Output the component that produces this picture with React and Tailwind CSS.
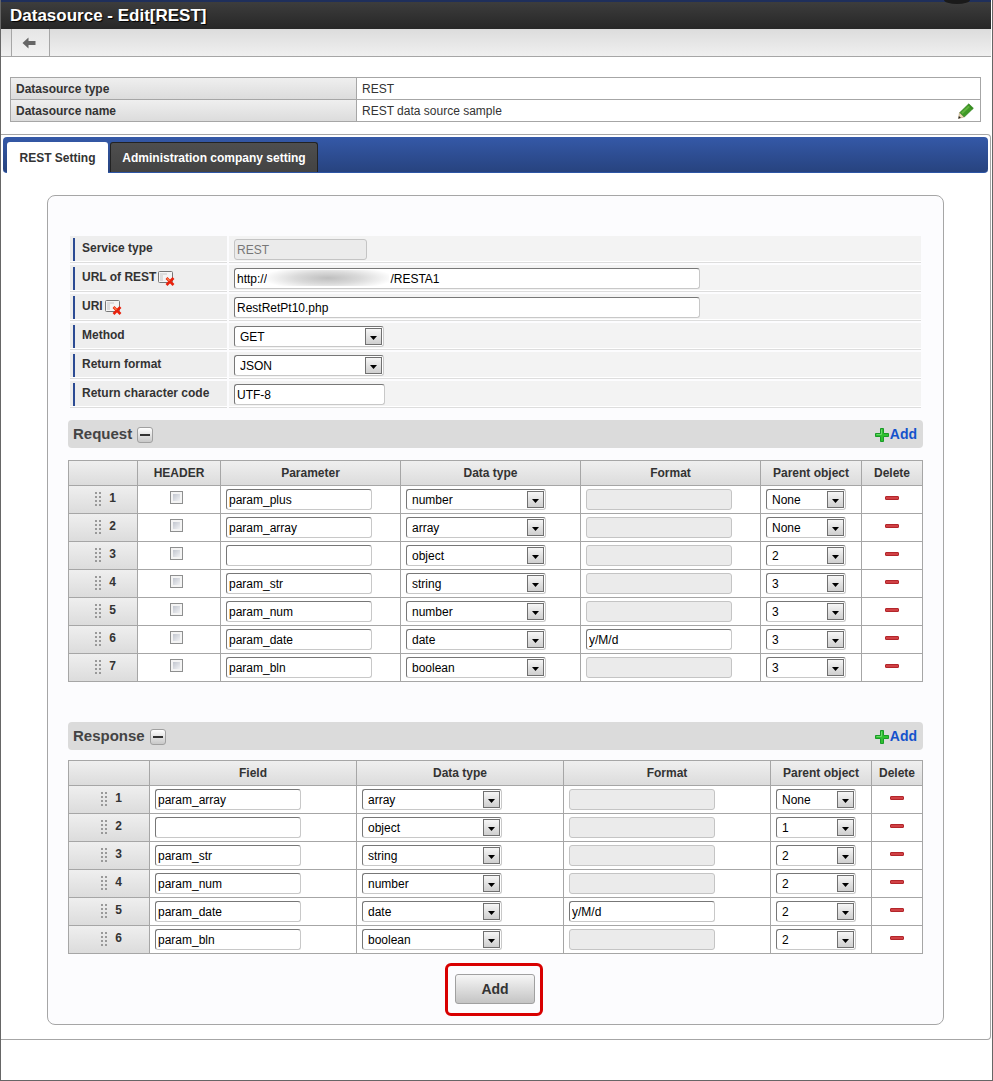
import { useState } from "react";

const REQUEST_ROWS = [
  { name: "param_plus", type: "number", format: "", parent: "None" },
  { name: "param_array", type: "array", format: "", parent: "None" },
  { name: "", type: "object", format: "", parent: "2" },
  { name: "param_str", type: "string", format: "", parent: "3" },
  { name: "param_num", type: "number", format: "", parent: "3" },
  { name: "param_date", type: "date", format: "y/M/d", parent: "3" },
  { name: "param_bln", type: "boolean", format: "", parent: "3" },
];

const RESPONSE_ROWS = [
  { name: "param_array", type: "array", format: "", parent: "None" },
  { name: "", type: "object", format: "", parent: "1" },
  { name: "param_str", type: "string", format: "", parent: "2" },
  { name: "param_num", type: "number", format: "", parent: "2" },
  { name: "param_date", type: "date", format: "y/M/d", parent: "2" },
  { name: "param_bln", type: "boolean", format: "", parent: "2" },
];

const DATA_TYPES = ["string", "number", "boolean", "date", "array", "object"];
const PARENTS = ["None", "1", "2", "3", "4", "5", "6", "7"];

// the host part of the address is masked by an overlay
const REST_URL = `http://${"\u00a0".repeat(37)}/RESTA1`;

function BackIcon() {
  return (
    <svg width="14" height="12" viewBox="0 0 14 12" aria-hidden="true">
      <path d="M0.5 6 6.5 0.5V4H13.5V8H6.5V11.5Z" fill="#666" />
    </svg>
  );
}

function PencilIcon() {
  return (
    <svg width="16" height="16" viewBox="0 0 16 16" aria-hidden="true">
      <path d="M0.5 15.5 1.5 9.5 6 14Z" fill="#ecd9b4" stroke="#a08a60" strokeWidth="0.5" />
      <path d="M0.3 15.7 0.9 13 2.9 14.8Z" fill="#222" />
      <path d="M1.8 9.5 10.8 0.8 15.4 5.2 6.3 14Z" fill="#3f9a26" stroke="#2a7a18" strokeWidth="0.6" />
      <path d="M3.2 9.6 11 2.2 12.4 3.5 4.6 11Z" fill="#62b23e" />
      <path d="M10 1.6 14.6 6" stroke="#2a7a18" strokeWidth="0.8" />
    </svg>
  );
}

function ClearIcon() {
  return (
    <svg width="18" height="16" viewBox="0 0 18 16" aria-hidden="true">
      <rect x="0.5" y="1.5" width="14" height="11" rx="1" fill="#f4f4f4" stroke="#777" />
      <path d="M2 3H9V5H5V11H2Z" fill="#ddd" />
      <path d="M8.5 8 15.5 15M15.5 8 8.5 15" stroke="#e8210c" strokeWidth="2.6" />
      <path d="M9 8.4 11.5 10.8" stroke="#ff8a4a" strokeWidth="1.2" />
    </svg>
  );
}

function PlusIcon() {
  return (
    <svg width="14" height="14" viewBox="0 0 14 14" aria-hidden="true">
      <path d="M5.5 0.5H8.5V5.5H13.5V8.5H8.5V13.5H5.5V8.5H0.5V5.5H5.5Z" fill="#2fc22f" stroke="#1a9a28" />
      <path d="M6.5 1.5V6.5H1.5" fill="none" stroke="#6bd86b" />
    </svg>
  );
}

function DragDots() {
  return (
    <svg width="6" height="14" viewBox="0 0 6 14" fill="#999" aria-hidden="true">
      {[0, 4, 8, 12].map((y) => (
        <g key={y}>
          <rect x="0" y={y} width="2" height="2" />
          <rect x="4" y={y} width="2" height="2" />
        </g>
      ))}
    </svg>
  );
}

function TextInput({ className = "", disabled = false, ...props }) {
  const look = disabled
    ? "border-[#c4c4c4] bg-[#ebebeb] text-[#777]"
    : "border-t-[#777] border-l-[#777] border-r-[#c8c8c8] border-b-[#c8c8c8] bg-white text-black";

  return (
    <input
      type="text"
      disabled={disabled}
      className={`block h-[21px] rounded-[3px] border px-[2px] text-xs outline-none ${look} ${className}`}
      {...props}
    />
  );
}

function SelectBox({ className = "", options, ...props }) {
  return (
    <span className={`relative block h-[21px] ${className}`}>
      <select
        className="block h-full w-full appearance-none rounded-[3px] border border-t-[#777] border-l-[#777] border-r-[#c8c8c8] border-b-[#c8c8c8] bg-white pr-5 pl-[5px] text-xs text-black outline-none"
        {...props}
      >
        {options.map((option) => (
          <option key={option}>{option}</option>
        ))}
      </select>
      <span className="pointer-events-none absolute top-[2px] right-[2px] flex h-[17px] w-[17px] items-center justify-center border border-[#707070] bg-linear-to-b from-[#f6f6f6] to-[#cfcfcf] pt-[2px]">
        <svg width="7" height="4" viewBox="0 0 7 4" aria-hidden="true">
          <path d="M0 0H7L3.5 4Z" fill="#000" />
        </svg>
      </span>
    </span>
  );
}

function FormRow({ id, label, clearable = false, children }) {
  return (
    <div className="flex gap-[2px]">
      <div className="flex h-[25px] w-[157px] shrink-0 items-end bg-[#eee] pl-[3px] shadow-[0_1px_#fff,0_2px_#ddd]">
        <div className="flex h-[23px] items-center gap-[2px] border-l-2 border-[#2c4b93] pb-[3px] pl-[7px]">
          <label htmlFor={id} className="font-bold">
            {label}
          </label>
          {clearable && (
            <button type="button" aria-label={`Clear ${label}`} className="mt-[2px]">
              <ClearIcon />
            </button>
          )}
        </div>
      </div>
      <div className="flex h-[25px] flex-1 items-end bg-[#f3f3f3] pb-px pl-[5px] shadow-[0_1px_#fff,0_2px_#ddd]">
        {children}
      </div>
    </div>
  );
}

function SectionBar({ title, open, onToggle, onAdd }) {
  return (
    <div className="flex h-7 items-center justify-between rounded bg-[#dbdbdb] pr-[6px] pl-[5px]">
      <div className="flex items-center gap-[5px]">
        <h2 className="text-[15px] leading-5 font-bold text-[#444]">{title}</h2>
        <button
          type="button"
          aria-label={`Toggle ${title}`}
          aria-expanded={open}
          onClick={onToggle}
          className="mt-[2px] flex h-4 w-4 items-center justify-center rounded-[3px] border border-[#a0a0a0] bg-linear-to-b from-white to-[#c8c8c8]"
        >
          <span className="h-[2px] w-[10px] bg-[#333]" />
        </button>
      </div>
      <button
        type="button"
        onClick={onAdd}
        className="flex items-center gap-px text-sm leading-5 font-bold text-[#1452cc]"
      >
        <span className="mt-[2px]">
          <PlusIcon />
        </span>
        Add
      </button>
    </div>
  );
}

function ParamTable({ title, nameLabel, rows, withHeaderFlag = false, onDelete }) {
  const th = "border-r border-b border-[#a6a6a6] bg-linear-to-b from-[#efefef] to-[#dcdcdc] font-bold";
  const td = "h-7 border-r border-b border-[#a6a6a6] bg-white p-0 pl-[5px]";

  return (
    <table className="w-full table-fixed border-separate border-spacing-0 border-t border-l border-[#a6a6a6]">
      <colgroup>
        <col className={withHeaderFlag ? "w-[69px]" : "w-[81px]"} />
        {withHeaderFlag && <col className="w-[83px]" />}
        <col />
        <col />
        <col />
        <col className="w-[101px]" />
        <col className={withHeaderFlag ? "w-[61px]" : "w-[51px]"} />
      </colgroup>
      <thead>
        <tr className="h-[25px]">
          <th className={th} aria-label="Order" />
          {withHeaderFlag && <th className={th}>HEADER</th>}
          <th className={th}>{nameLabel}</th>
          <th className={th}>Data type</th>
          <th className={th}>Format</th>
          <th className={th}>Parent object</th>
          <th className={th}>Delete</th>
        </tr>
      </thead>
      <tbody>
        {rows.map((row, index) => {
          const rowLabel = `${title} ${index + 1}`;
          return (
            <tr key={index}>
              <th className={`${th} p-0 pl-[5px]`} scope="row">
                <span className="flex items-center justify-center gap-2 pb-[2px]">
                  <DragDots />
                  <span className="pb-[2px]">{index + 1}</span>
                </span>
              </th>
              {withHeaderFlag && (
                <td className={`${td} pr-[10px]`}>
                  <input
                    type="checkbox"
                    aria-label={`${rowLabel} header`}
                    className="mx-auto mb-1 block h-[13px] w-[13px] appearance-none border border-[#8e8f8f] bg-linear-to-br from-[#b4b9c4] to-white shadow-[inset_0_0_0_2px_#f4f4f4] checked:from-[#4b6fae]"
                  />
                </td>
              )}
              <td className={td}>
                <TextInput className="w-[146px]" defaultValue={row.name} aria-label={`${rowLabel} name`} />
              </td>
              <td className={td}>
                <SelectBox
                  className="w-[140px]"
                  options={DATA_TYPES}
                  defaultValue={row.type}
                  aria-label={`${rowLabel} data type`}
                />
              </td>
              <td className={td}>
                <TextInput
                  className="w-[146px]"
                  disabled={row.type !== "date"}
                  defaultValue={row.format}
                  aria-label={`${rowLabel} format`}
                />
              </td>
              <td className={td}>
                <SelectBox
                  className="w-20"
                  options={PARENTS}
                  defaultValue={row.parent}
                  aria-label={`${rowLabel} parent object`}
                />
              </td>
              <td className={`${td} pr-[5px]`}>
                <button
                  type="button"
                  aria-label={`Delete ${rowLabel}`}
                  onClick={() => onDelete(index)}
                  className="mx-auto mb-[3px] block h-1 w-[14px] rounded-[1px] border border-[#b3262b] bg-[#d04145]"
                />
              </td>
            </tr>
          );
        })}
      </tbody>
    </table>
  );
}

function App() {
  const [requestRows, setRequestRows] = useState(REQUEST_ROWS);
  const [responseRows, setResponseRows] = useState(RESPONSE_ROWS);
  const [requestOpen, setRequestOpen] = useState(true);
  const [responseOpen, setResponseOpen] = useState(true);

  function newRow() {
    return { name: "", type: "string", format: "", parent: "None" };
  }

  const infoLabel =
    "h-[22px] w-[346px] border-r border-b border-[#a6a6a6] bg-linear-to-b from-[#efefef] to-[#dcdcdc] p-0 px-[5px] text-left font-bold";
  const infoValue = "h-[22px] border-r border-b border-[#a6a6a6] p-0 px-[5px]";

  return (
    <div className="border-r border-b border-l border-[#666] bg-white pb-10 font-['Liberation_Sans',Arial,sans-serif] text-xs text-[#333]">
      <header className="mr-px border-t-2 border-[#1f2f5b] bg-linear-to-b from-[#3d3d3d] to-[#272727]">
        <h1 className="pl-[9px] text-[17px] leading-[27px] font-bold text-white [text-shadow:1px_1px_1px_#000]">
          Datasource - Edit[REST]
        </h1>
      </header>
      <span className="absolute top-0 right-[23px] h-1 w-[26px] bg-[#1a1a1a] [border-radius:0_0_50%_50%/0_0_100%_100%]" />

      <nav className="mr-px flex h-7 border-b border-[#a6a6a6] bg-linear-to-b from-[#dcdcdc] to-[#f0f0f0] pl-[10px]">
        <button
          type="button"
          aria-label="Back"
          className="flex w-[39px] items-center justify-center border-r border-l border-[#a6a6a6] bg-linear-to-b from-[#e6e6e6] to-[#f2f2f2] pr-[3px]"
        >
          <BackIcon />
        </button>
      </nav>

      <div className="mt-5 mr-[11px] ml-[9px]">
        <table className="w-full table-fixed border-separate border-spacing-0 border-t border-l border-[#a6a6a6]">
          <tbody>
            <tr>
              <th scope="row" className={infoLabel}>
                Datasource type
              </th>
              <td className={infoValue}>REST</td>
            </tr>
            <tr>
              <th scope="row" className={infoLabel}>
                Datasource name
              </th>
              <td className={infoValue}>
                <div className="flex items-center justify-between pr-px">
                  REST data source sample
                  <button type="button" aria-label="Edit name" className="mt-px h-4">
                    <PencilIcon />
                  </button>
                </div>
              </td>
            </tr>
          </tbody>
        </table>
      </div>

      <main className="mt-3 mr-px rounded-r border-t border-r border-b border-[#a6a6a6] px-[2px] pt-[2px] pb-[14px]">
        <div
          role="tablist"
          className="flex h-9 items-end gap-[2px] rounded border-b border-[#2d55a5] bg-linear-to-b from-[#3559a8] to-[#27437f] pl-1"
        >
          <button
            type="button"
            role="tab"
            aria-selected="true"
            className="-mb-px h-[31px] w-[101px] rounded-t-[3px] bg-white font-bold"
          >
            REST Setting
          </button>
          <button
            type="button"
            role="tab"
            aria-selected="false"
            className="h-[30px] w-[208px] rounded-t-[3px] border border-b-0 border-[#222] bg-linear-to-b from-[#4e4e4e] to-[#434343] font-bold text-white"
          >
            Administration company setting
          </button>
        </div>

        <form
          className="mx-11 mt-[22px] rounded-lg border border-[#a6a6a6] bg-[#fcfcfe] px-5 pt-10 pb-2"
          onSubmit={(event) => event.preventDefault()}
        >
          <div className="flex flex-col gap-1 px-[2px]">
            <FormRow id="service-type" label="Service type">
              <TextInput id="service-type" className="w-[133px]" disabled defaultValue="REST" />
            </FormRow>
            <FormRow id="rest-url" label="URL of REST" clearable>
              <div className="relative">
                <TextInput id="rest-url" className="w-[466px]" defaultValue={REST_URL} />
                <span className="absolute top-[2px] left-[33px] h-4 w-[122px] bg-[radial-gradient(ellipse_66px_12px_at_center,#bebebe,#dadada_50%,#fff)]" />
              </div>
            </FormRow>
            <FormRow id="uri" label="URI" clearable>
              <TextInput id="uri" className="w-[466px]" defaultValue="RestRetPt10.php" />
            </FormRow>
            <FormRow id="method" label="Method">
              <SelectBox id="method" className="w-[150px]" options={["GET", "POST"]} />
            </FormRow>
            <FormRow id="return-format" label="Return format">
              <SelectBox id="return-format" className="w-[150px]" options={["JSON", "XML"]} />
            </FormRow>
            <FormRow id="charset" label="Return character code">
              <TextInput id="charset" className="w-[151px]" defaultValue="UTF-8" />
            </FormRow>
          </div>

          <section className="mt-[14px]">
            <SectionBar
              title="Request"
              open={requestOpen}
              onToggle={() => setRequestOpen(!requestOpen)}
              onAdd={() => setRequestRows([...requestRows, newRow()])}
            />
            {requestOpen && (
              <div className="mt-3">
                <ParamTable
                  title="Request"
                  nameLabel="Parameter"
                  rows={requestRows}
                  withHeaderFlag
                  onDelete={(index) => setRequestRows(requestRows.filter((_, i) => i !== index))}
                />
              </div>
            )}
          </section>

          <section className="mt-10">
            <SectionBar
              title="Response"
              open={responseOpen}
              onToggle={() => setResponseOpen(!responseOpen)}
              onAdd={() => setResponseRows([...responseRows, newRow()])}
            />
            {responseOpen && (
              <div className="mt-[10px]">
                <ParamTable
                  title="Response"
                  nameLabel="Field"
                  rows={responseRows}
                  onDelete={(index) => setResponseRows(responseRows.filter((_, i) => i !== index))}
                />
              </div>
            )}
          </section>

          <div className="mt-[9px] flex justify-center pr-[3px]">
            <div className="rounded-md border-3 border-[#d80000] pt-2 pr-[5px] pb-[9px] pl-[7px]">
              <button
                type="submit"
                className="block h-[30px] w-20 rounded-[3px] border border-[#a0a0a0] bg-linear-to-b from-[#f6f6f6] to-[#c4c4c4] text-sm font-bold"
              >
                Add
              </button>
            </div>
          </div>
        </form>
      </main>
    </div>
  );
}

export default App;
